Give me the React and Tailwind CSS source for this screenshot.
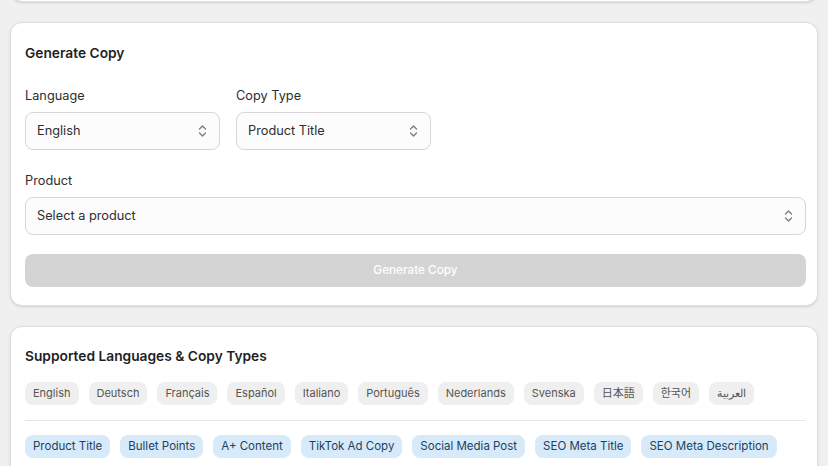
const languages = ["English", "Deutsch", "Français", "Español", "Italiano", "Português", "Nederlands", "Svenska", "日本語", "한국어", "العربية"];
const copyTypes = ["Product Title", "Bullet Points", "A+ Content", "TikTok Ad Copy", "Social Media Post", "SEO Meta Title", "SEO Meta Description"];

const Chevrons = () => (
  <svg width="9" height="14" viewBox="0 0 9 14" fill="none" stroke="#7a7a7a" strokeWidth="1.3" strokeLinecap="round" strokeLinejoin="round">
    <path d="M1.5 5 L4.5 2 L7.5 5" />
    <path d="M1.5 9 L4.5 12 L7.5 9" />
  </svg>
);

const SelectBox = ({ value, className }) => (
  <div className={`h-[38px] flex items-center justify-between pl-[11px] pr-[12px] bg-[#fcfcfc] border border-[#d6d6d6] rounded-[8px] text-[12.75px] text-[#2e2e2e] ${className}`}>
    <span>{value}</span>
    <Chevrons />
  </div>
);

const Field = ({ label, children }) => (
  <div className="flex flex-col gap-[6px]">
    <label className="text-[12.75px] leading-[20px] text-[#2e2e2e]">{label}</label>
    {children}
  </div>
);

export default function App() {
  return (
    <div
      className="h-[466px] overflow-hidden bg-[#f0f0f0] px-[10px] flex flex-col gap-[20px]"
      style={{ fontFamily: 'Inter, "Noto Sans", "Noto Sans CJK JP", "Noto Sans CJK KR", sans-serif' }}
    >
      <div className="-mt-[38px] h-[40px] shrink-0 bg-white border border-[#dedede] rounded-[12px] shadow-sm" />

      <div className="shrink-0 bg-white border border-[#dedede] rounded-[12px] shadow-sm pl-[14px] pr-[11px] pt-[20px] pb-[18px]">
        <h2 className="text-[13.75px] leading-[20px] font-semibold text-[#1f1f1f]">Generate Copy</h2>
        <div className="mt-[23px] flex gap-[16px]">
          <Field label="Language">
            <SelectBox value="English" className="w-[195px]" />
          </Field>
          <Field label="Copy Type">
            <SelectBox value="Product Title" className="w-[195px]" />
          </Field>
        </div>
        <div className="mt-[21px]">
          <Field label="Product">
            <SelectBox value="Select a product" className="w-full" />
          </Field>
        </div>
        <button className="mt-[19px] w-full h-[33px] rounded-[8px] bg-[#d4d4d4] text-white text-[11.75px] font-medium">
          Generate Copy
        </button>
      </div>

      <div className="shrink-0 bg-white border border-[#dedede] rounded-[12px] shadow-sm pl-[14px] pr-[11px] pt-[19px] pb-[18px]">
        <h2 className="text-[13.75px] leading-[20px] font-semibold text-[#1f1f1f]">Supported Languages &amp; Copy Types</h2>
        <div className="mt-[16px] flex flex-wrap gap-[10px]">
          {languages.map((l) => (
            <span key={l} className="h-[23px] flex items-center px-[8px] rounded-[8px] bg-[#efefef] text-[11px] text-[#555]">
              {l}
            </span>
          ))}
        </div>
        <div className="mt-[15px] border-t border-[#e6e6e6]" />
        <div className="mt-[14px] flex flex-wrap gap-[10px]">
          {copyTypes.map((c) => (
            <span key={c} className="h-[23px] flex items-center px-[8px] rounded-[8px] bg-[#d6eafa] text-[11.5px] text-[#1e3f60]">
              {c}
            </span>
          ))}
        </div>
      </div>
    </div>
  );
}
